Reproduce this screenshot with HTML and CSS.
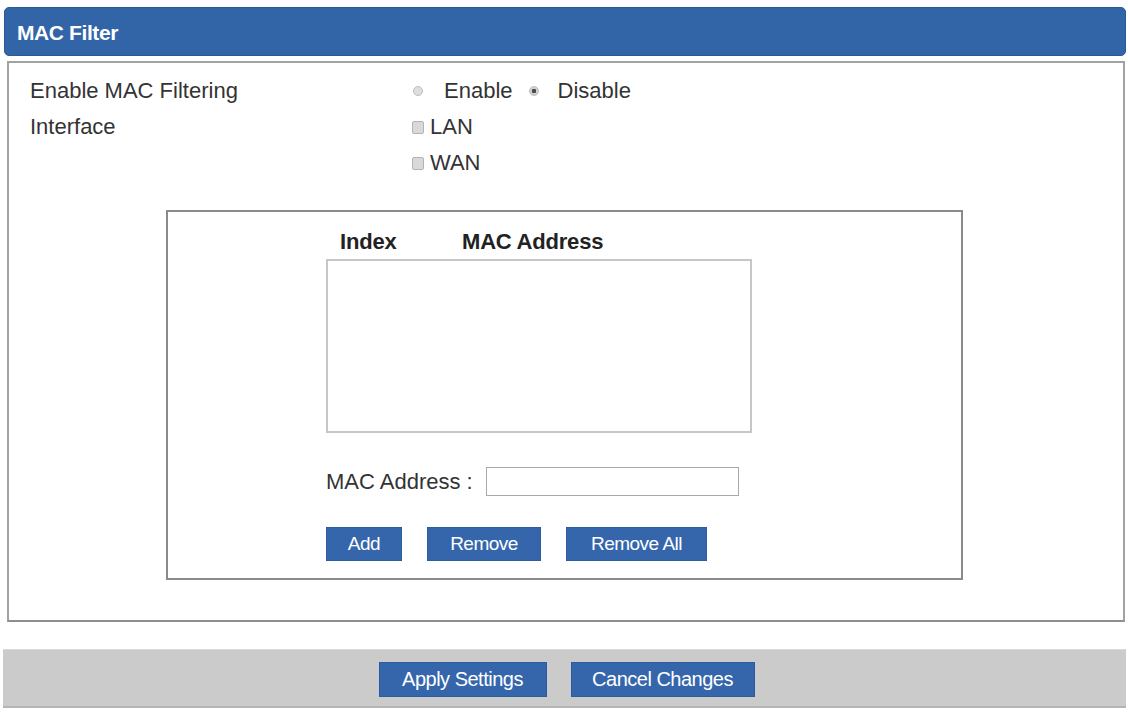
FILE: index.html
```html
<!DOCTYPE html>
<html lang="en">
<head>
    <meta charset="UTF-8">
    <title>MAC Filter</title>
    <link rel="stylesheet" href="styles.css">
</head>
<body>
<div class="panelTitle">MAC Filter</div>
<div class="panelBody">
    <div class="formRow">
        <span class="formLabel">Enable MAC Filtering</span>
        <span class="formValue">
            <label class="opt"><input type="radio" name="macFilter" value="1"><span>Enable</span></label>
            <label class="opt"><input type="radio" name="macFilter" value="0" checked><span>Disable</span></label>
        </span>
    </div>
    <div class="formRow">
        <span class="formLabel">Interface</span>
        <span class="formValue">
            <label class="chk"><input type="checkbox" id="ifLan"><span>LAN</span></label>
        </span>
    </div>
    <div class="formRow">
        <span class="formLabel"></span>
        <span class="formValue">
            <label class="chk"><input type="checkbox" id="ifWan"><span>WAN</span></label>
        </span>
    </div>

    <div class="macBox">
        <div class="listHead">
            <span class="colIndex">Index</span>
            <span class="colMac">MAC Address</span>
        </div>
        <div class="macList" id="macList"></div>
        <div class="macInput">
            <span>MAC Address :</span>
            <input type="text" id="macAddr">
        </div>
        <div class="macButtons">
            <button class="btn btnAdd">Add</button>
            <button class="btn btnRemove">Remove</button>
            <button class="btn btnRemoveAll">Remove All</button>
        </div>
    </div>
</div>
<div class="actionBar">
    <button class="btn btnApply">Apply Settings</button>
    <button class="btn btnCancel">Cancel Changes</button>
</div>
</body>
</html>
```

FILE: styles.css
```css
body{
    margin:0;
    background:#FFFFFF;
    font-family:"Liberation Sans", Arial, sans-serif;
    color:#333333;
}

.panelTitle{
    margin:7px 2px 0 4px;
    height:49px;
    line-height:49px;
    padding-left:12px;
    box-sizing:border-box;
    border:1px solid #2b5996;
    border-radius:5px;
    background:#3264a8;
    color:#FFFFFF;
    font-size:21px;
    font-weight:bold;
    letter-spacing:-0.4px;
}

.panelBody{
    margin:5px 3px 0 7px;
    border:2px solid #a2a2a2;
    border-bottom-color:#8e8e8e;
    padding:10px 0 40px 0;
}

.formRow{
    display:flex;
    height:36px;
    align-items:center;
    font-size:22px;
}
.formLabel{
    width:382px;
    padding-left:21px;
}
.formValue{
    display:flex;
    align-items:center;
    gap:16px;
}
.opt, .chk{
    display:flex;
    align-items:center;
}

.opt input{
    appearance:none;
    width:10px;
    height:10px;
    margin:0 21px 0 1px;
    border:1px solid #bdbdbd;
    border-radius:50%;
    background:#dedede;
    box-sizing:border-box;
}
.opt input:checked{
    background:radial-gradient(circle, #4a4a4a 0 2px, #d0d0d0 2.5px);
}
.opt + .opt input{
    margin:0 19px 0 0;
}

.chk input{
    appearance:none;
    width:12px;
    height:13px;
    margin:0 6px 0 0;
    border:1px solid #b3b3b3;
    border-radius:2px;
    background:#d9d9d9;
    box-sizing:border-box;
}

.macBox{
    width:797px;
    margin:29px 0 0 157px;
    border:2px solid #8a8a8a;
    box-sizing:border-box;
    padding:15px 0 17px 158px;
}

.listHead{
    display:flex;
    height:30px;
    line-height:30px;
    padding-left:14px;
    font-size:22px;
    font-weight:bold;
    letter-spacing:-0.2px;
    color:#222222;
}
.colIndex{
    width:122px;
}

.macList{
    width:426px;
    height:174px;
    margin-top:2px;
    border:2px solid #c6c6c6;
    box-sizing:border-box;
}

.macInput{
    display:flex;
    align-items:center;
    margin-top:34px;
    font-size:22px;
}
.macInput input{
    width:253px;
    height:29px;
    margin-left:13px;
    border:1px solid #aaaaaa;
    box-sizing:border-box;
}

.macButtons{
    display:flex;
    gap:25px;
    margin-top:31px;
}

.btn{
    height:34px;
    padding:0;
    border:1px solid #2d5c9e;
    background:#3566ac;
    color:#FFFFFF;
    font-family:"Liberation Sans", Arial, sans-serif;
    font-size:19px;
    letter-spacing:-0.5px;
}
.btnAdd{ width:76px; }
.btnRemove{ width:114px; }
.btnRemoveAll{ width:141px; }

.actionBar{
    display:flex;
    justify-content:center;
    gap:24px;
    margin:27px 2px 0 3px;
    height:59px;
    box-sizing:border-box;
    padding-top:12px;
    padding-left:4px;
    background:#cbcbcb;
    border-top:1px solid #d8d8d8;
    border-bottom:2px solid #b4b4b4;
}
.actionBar .btn{
    height:35px;
    font-size:20px;
}
.btnApply{ width:168px; }
.btnCancel{ width:184px; }
```
